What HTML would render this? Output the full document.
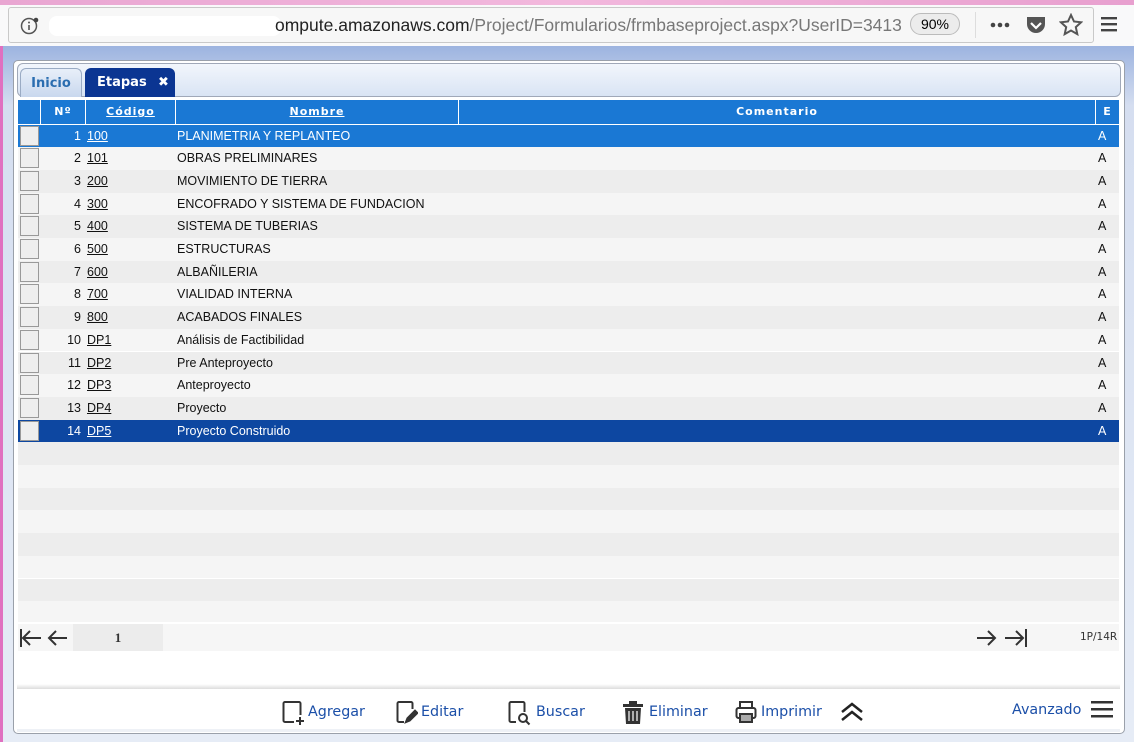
<!DOCTYPE html><html><head><meta charset="utf-8"><style>
*{margin:0;padding:0;box-sizing:border-box}
body{width:1134px;height:742px;overflow:hidden;font-family:"Liberation Sans",sans-serif;background:#fff;position:relative}
.top{position:absolute;left:0;top:0;width:1134px;height:46px;background:#f9f9fa}
.pinkbar{position:absolute;left:0;top:0;width:1134px;height:5px;background:linear-gradient(90deg,#e9a6d2,#f2b8dd 50%,#e8a0cf)}
.url{position:absolute;left:8px;top:7px;width:1086px;height:36px;border:1px solid #c9c9c9;border-radius:3px;background:#f7f7f7}
.page{position:absolute;left:0;top:46px;width:1134px;height:696px;background:linear-gradient(#9db4e0 0,#d5def0 60px,#e6ecf6 100%)}
.lpink{position:absolute;left:0;top:46px;width:3px;height:696px;background:#e070c0}
.panel{position:absolute;left:13px;top:60px;width:1112px;height:674px;background:#fff;border:1px solid #9aa0aa;border-radius:5px}
.tabbar{position:absolute;left:17px;top:63px;width:1104px;height:34px;border:1px solid #a0a8b8;border-radius:6px;background:linear-gradient(#f2f6fc,#d9e4f4)}
.tab{position:absolute;top:68px;height:29px;border-radius:6px 6px 0 0;font-size:13px;font-weight:bold;line-height:30px;font-family:"DejaVu Sans",sans-serif}
.hdr{position:absolute;left:18px;top:100px;width:1101px;height:24px;background:#1a78d4;color:#fff;font-size:11px;font-weight:bold;letter-spacing:1px;font-family:"DejaVu Sans",sans-serif}
.hdr div{position:absolute;top:0;height:24px;line-height:24px;text-align:center;border-left:1px solid #fff}
.row{position:absolute;left:18px;width:1101px;height:22.7px;font-size:12.5px;color:#111;line-height:22px}
.row span{position:absolute;top:0}
.cb{position:absolute;left:2px;top:1px;width:19px;height:20px;border:1px solid #999;background:#eee}
.n{width:63px;left:0;text-align:right}
.c{left:69px;text-decoration:underline}
.nm{left:159px}
.e{left:1080px}
.sel1{background:#1a78d4;color:#fff}.sel2{background:#0d47a1;color:#fff}
.ev{background:#f5f5f5}.od{background:#ededed}
.btn{position:absolute;top:700px;color:#1b4fa8;font-size:14.3px;line-height:25px;font-family:"DejaVu Sans",sans-serif;white-space:nowrap}
.btn svg{position:absolute}
</style></head><body>
<div class="top"></div><div class="pinkbar"></div>
<div class="url">
<svg style="position:absolute;left:11px;top:8px" width="20" height="20"><circle cx="9" cy="10" r="7.5" fill="none" stroke="#555" stroke-width="1.5"/><rect x="8.2" y="9" width="1.6" height="5" fill="#555"/><circle cx="9" cy="6.5" r="1" fill="#555"/><circle cx="16" cy="4" r="2.3" fill="#444"/></svg>
<div style="position:absolute;left:40px;top:8px;width:232px;height:20px;background:#fff;border-radius:8px"></div>
<div style="position:absolute;left:266px;top:7px;font-size:17.5px;color:#222;white-space:nowrap">ompute.amazonaws.com<span style="color:#777">/Project/Formularios/frmbaseproject.aspx?UserID=34130</span></div>
<div style="position:absolute;left:892px;top:0;width:70px;height:34px;background:#f7f7f7"></div>
<div style="position:absolute;left:901px;top:5px;width:50px;height:22px;border:1px solid #bbb;border-radius:11px;background:#ececec;font-size:14px;text-align:center;line-height:20px">90%</div>
<div style="position:absolute;left:966px;top:4px;width:1px;height:26px;background:#ddd"></div>
<svg style="position:absolute;left:981px;top:14px" width="22" height="6" fill="#444"><circle cx="3" cy="3" r="2.3"/><circle cx="10" cy="3" r="2.3"/><circle cx="17" cy="3" r="2.3"/></svg>
<svg style="position:absolute;left:1016px;top:6px" width="22" height="22"><path d="M2 3h18v7a9 9 0 0 1-18 0z" fill="#555"/><path d="M6 9l5 5 5-5" fill="none" stroke="#fff" stroke-width="2.2"/></svg>
<svg style="position:absolute;left:1050px;top:5px" width="24" height="24"><path d="M12 2l3 6.5 7 .8-5.2 4.8 1.5 7L12 17.5 5.7 21.1l1.5-7L2 9.3l7-.8z" fill="none" stroke="#555" stroke-width="2"/></svg>
</div>
<svg style="position:absolute;left:1101px;top:16px" width="20" height="18"><rect y="1" width="16" height="2.4" fill="#444"/><rect y="7" width="16" height="2.4" fill="#444"/><rect y="13" width="16" height="2.4" fill="#444"/></svg>
<div class="page"></div><div class="lpink"></div>
<div class="panel"></div>
<div class="tabbar"></div>
<div class="tab" style="left:20px;width:62px;border:1px solid #9aabc4;border-bottom:none;background:linear-gradient(#e8eff9,#c9d8ee);color:#2a6db0;text-align:center">Inicio</div>
<div class="tab" style="left:85px;width:90px;background:#0b3592;color:#fff;padding-left:12px">Etapas<span style="position:absolute;left:73px">✖</span></div>
<div class="hdr">
<div style="left:22px;width:45px">Nº</div>
<div style="left:67px;width:90px;text-decoration:underline">Código</div>
<div style="left:157px;width:283px;text-decoration:underline">Nombre</div>
<div style="left:440px;width:637px;border-left:1px solid #fff">Comentario</div>
<div style="left:1077px;width:24px">E</div>
</div>
<div class="row sel1" style="top:124.5px"><div class="cb"></div><span class="n">1</span><span class="c">100</span><span class="nm">PLANIMETRIA Y REPLANTEO</span><span class="e">A</span></div>
<div class="row ev" style="top:147.2px"><div class="cb"></div><span class="n">2</span><span class="c">101</span><span class="nm">OBRAS PRELIMINARES</span><span class="e">A</span></div>
<div class="row od" style="top:169.9px"><div class="cb"></div><span class="n">3</span><span class="c">200</span><span class="nm">MOVIMIENTO DE TIERRA</span><span class="e">A</span></div>
<div class="row ev" style="top:192.6px"><div class="cb"></div><span class="n">4</span><span class="c">300</span><span class="nm">ENCOFRADO Y SISTEMA DE FUNDACION</span><span class="e">A</span></div>
<div class="row od" style="top:215.3px"><div class="cb"></div><span class="n">5</span><span class="c">400</span><span class="nm">SISTEMA DE TUBERIAS</span><span class="e">A</span></div>
<div class="row ev" style="top:238px"><div class="cb"></div><span class="n">6</span><span class="c">500</span><span class="nm">ESTRUCTURAS</span><span class="e">A</span></div>
<div class="row od" style="top:260.7px"><div class="cb"></div><span class="n">7</span><span class="c">600</span><span class="nm">ALBAÑILERIA</span><span class="e">A</span></div>
<div class="row ev" style="top:283.4px"><div class="cb"></div><span class="n">8</span><span class="c">700</span><span class="nm">VIALIDAD INTERNA</span><span class="e">A</span></div>
<div class="row od" style="top:306.1px"><div class="cb"></div><span class="n">9</span><span class="c">800</span><span class="nm">ACABADOS FINALES</span><span class="e">A</span></div>
<div class="row ev" style="top:328.8px"><div class="cb"></div><span class="n">10</span><span class="c">DP1</span><span class="nm">Análisis de Factibilidad</span><span class="e">A</span></div>
<div class="row od" style="top:351.5px"><div class="cb"></div><span class="n">11</span><span class="c">DP2</span><span class="nm">Pre Anteproyecto</span><span class="e">A</span></div>
<div class="row ev" style="top:374.2px"><div class="cb"></div><span class="n">12</span><span class="c">DP3</span><span class="nm">Anteproyecto</span><span class="e">A</span></div>
<div class="row od" style="top:396.9px"><div class="cb"></div><span class="n">13</span><span class="c">DP4</span><span class="nm">Proyecto</span><span class="e">A</span></div>
<div class="row sel2" style="top:419.6px"><div class="cb"></div><span class="n">14</span><span class="c">DP5</span><span class="nm">Proyecto Construido</span><span class="e">A</span></div>
<div class="row od" style="top:442.3px"></div><div class="row ev" style="top:465px"></div>
<div class="row od" style="top:487.7px"></div><div class="row ev" style="top:510.4px"></div>
<div class="row od" style="top:533.1px"></div><div class="row ev" style="top:555.8px"></div>
<div class="row od" style="top:578.5px"></div><div class="row ev" style="top:601.2px;height:21px"></div>
<div style="position:absolute;left:18px;top:624px;width:1101px;height:27px;background:#f6f6f6"></div>
<div style="position:absolute;left:73px;top:624px;width:90px;height:27px;background:#ececec;font-family:'Liberation Serif',serif;font-weight:bold;font-size:13px;text-align:center;line-height:27px;color:#333">1</div>
<svg style="position:absolute;left:19px;top:627px" width="54" height="22" fill="none" stroke="#333" stroke-width="2"><path d="M2 2v18M4 11h18M11 4l-7 7 7 7"/><path d="M30 11h18M37 4l-7 7 7 7"/></svg>
<svg style="position:absolute;left:975px;top:627px" width="54" height="22" fill="none" stroke="#333" stroke-width="2"><path d="M2 11h18M13 4l7 7-7 7"/><path d="M30 11h18M41 4l7 7-7 7M51 2v18"/></svg>
<div style="position:absolute;left:1080px;top:631px;font-size:10.5px;color:#333;font-family:'DejaVu Sans',sans-serif">1P/14R</div>
<div style="position:absolute;left:17px;top:684px;width:1103px;height:5px;background:linear-gradient(#fff,#ddd)"></div>
<div style="position:absolute;left:17px;top:729px;width:1103px;height:3px;background:#eef1f6"></div>
<div class="btn" style="left:282px"><svg style="left:0;top:0" width="22" height="26" fill="none" stroke="#333" stroke-width="2"><path d="M12 22H3a1.5 1.5 0 0 1-1.5-1.5v-17A1.5 1.5 0 0 1 3 2h14a1.5 1.5 0 0 1 1.5 1.5V15"/><path d="M18 17v8M14 21h8"/></svg><span style="margin-left:26px">Agregar</span></div>
<div class="btn" style="left:396px"><svg style="left:0;top:0" width="22" height="26" fill="none" stroke="#333" stroke-width="2"><path d="M8 22H3a1.5 1.5 0 0 1-1.5-1.5v-17A1.5 1.5 0 0 1 3 2h12a1.5 1.5 0 0 1 1.5 1.5V9"/><path d="M9 23l2-5 8-8 3 3-8 8z" fill="#333" stroke-width="1"/></svg><span style="margin-left:25px">Editar</span></div>
<div class="btn" style="left:508px"><svg style="left:0;top:0" width="24" height="26" fill="none" stroke="#333" stroke-width="2"><path d="M8 22H3a1.5 1.5 0 0 1-1.5-1.5v-17A1.5 1.5 0 0 1 3 2h12a1.5 1.5 0 0 1 1.5 1.5V12"/><circle cx="15" cy="18" r="4"/><path d="M18 21l3.5 3.5"/></svg><span style="margin-left:28px">Buscar</span></div>
<div class="btn" style="left:622px"><svg style="left:0;top:1px" width="22" height="24" fill="#333"><rect x="1" y="3" width="20" height="3"/><rect x="7" y="0" width="8" height="4"/><path d="M3 7h16l-1 16H4z"/><path d="M7 10v10M11 10v10M15 10v10" stroke="#fff" stroke-width="1.2"/></svg><span style="margin-left:27px">Eliminar</span></div>
<div class="btn" style="left:735px"><svg style="left:0;top:0" width="22" height="26" fill="none" stroke="#333" stroke-width="2"><rect x="5" y="2" width="12" height="6"/><rect x="1.5" y="8" width="19" height="10" rx="2"/><rect x="5" y="14" width="12" height="8" fill="#aaa"/></svg><span style="margin-left:26px">Imprimir</span></div>
<svg style="position:absolute;left:840px;top:702px" width="24" height="20" fill="none" stroke="#222" stroke-width="2.5"><path d="M2 10l10-8 10 8M2 18l10-8 10 8"/></svg>
<div class="btn" style="left:1012px;top:698px">Avanzado</div>
<svg style="position:absolute;left:1091px;top:701px" width="24" height="18" fill="#333"><rect y="0" width="22" height="2.5"/><rect y="7" width="22" height="2.5"/><rect y="14" width="22" height="2.5"/></svg>
</body></html>
